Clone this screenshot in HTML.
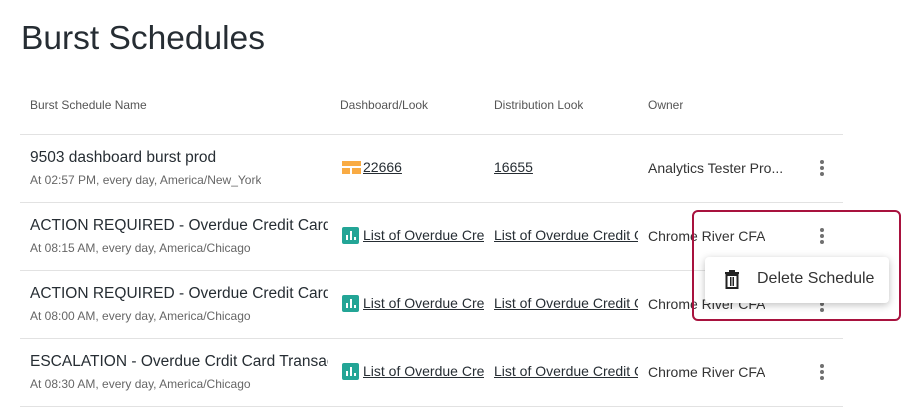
<!DOCTYPE html>
<html><head><style>
body{margin:0;width:906px;height:407px;background:#fff;font-family:"Liberation Sans",sans-serif;color:#262d33;position:relative;overflow:hidden}
.a{position:absolute;white-space:nowrap;overflow:hidden}
h1{position:absolute;left:21px;top:20px;margin:0;font-size:33.5px;font-weight:normal;color:#262d33}
.hd{font-size:12px;color:#555;top:98px}
.line{position:absolute;left:20px;width:823px;height:1px;background:#e2e2e2}
.nm{font-size:15.5px;color:#262d33;width:298px}
.sub{font-size:12px;color:#666}
.lk{font-size:14px;text-decoration:underline;color:#262d33}
.ow{font-size:14px;color:#333}
.dots{position:absolute;width:4px}
.dots i{display:block;width:4px;height:4px;border-radius:2px;background:#707070;margin-bottom:2px}
.ic{position:absolute;width:17px;height:17px;border-radius:2px;background:#23a596}
.ic b{position:absolute;bottom:4px;width:2px;background:#fff}
</style></head><body>
<h1>Burst Schedules</h1>
<div class="a hd" style="left:30px">Burst Schedule Name</div>
<div class="a hd" style="left:340px">Dashboard/Look</div>
<div class="a hd" style="left:494px">Distribution Look</div>
<div class="a hd" style="left:648px">Owner</div>
<div class="line" style="top:134px"></div>
<div class="line" style="top:202px"></div>
<div class="line" style="top:270px"></div>
<div class="line" style="top:338px"></div>
<div class="line" style="top:406px"></div>

<div class="a nm" style="left:30px;top:149px">9503 dashboard burst prod</div>
<div class="a sub" style="left:30px;top:173px">At 02:57 PM, every day, America/New_York</div>
<svg style="position:absolute;left:342px;top:161px" width="20" height="14"><rect x="0" y="0" width="19" height="5" fill="#f9ab43"/><rect x="0" y="7" width="8" height="6" fill="#f9ab43"/><rect x="10" y="7" width="9" height="6" fill="#f9ab43"/></svg>
<div class="a lk" style="left:363px;top:159px">22666</div>
<div class="a lk" style="left:494px;top:159px">16655</div>
<div class="a ow" style="left:648px;top:160px;width:140px">Analytics Tester Pro...</div>
<div class="dots" style="left:820px;top:160px"><i></i><i></i><i></i></div>

<div class="a nm" style="left:30px;top:217px">ACTION REQUIRED - Overdue Credit Card</div>
<div class="a sub" style="left:30px;top:241px">At 08:15 AM, every day, America/Chicago</div>
<div class="ic" style="left:342px;top:227px"><b style="left:4px;height:5px"></b><b style="left:8px;height:9px"></b><b style="left:12px;height:3px"></b></div>
<div class="a lk" style="left:363px;top:227px;width:121px">List of Overdue Credit</div>
<div class="a lk" style="left:494px;top:227px;width:144px">List of Overdue Credit Card</div>
<div class="a ow" style="left:648px;top:228px">Chrome River CFA</div>
<div class="dots" style="left:820px;top:228px"><i></i><i></i><i></i></div>

<div class="a nm" style="left:30px;top:285px">ACTION REQUIRED - Overdue Credit Card</div>
<div class="a sub" style="left:30px;top:309px">At 08:00 AM, every day, America/Chicago</div>
<div class="ic" style="left:342px;top:295px"><b style="left:4px;height:5px"></b><b style="left:8px;height:9px"></b><b style="left:12px;height:3px"></b></div>
<div class="a lk" style="left:363px;top:295px;width:121px">List of Overdue Credit</div>
<div class="a lk" style="left:494px;top:295px;width:144px">List of Overdue Credit Card</div>
<div class="a ow" style="left:648px;top:296px">Chrome River CFA</div>
<div class="dots" style="left:820px;top:296px"><i></i><i></i><i></i></div>

<div class="a nm" style="left:30px;top:353px">ESCALATION - Overdue Crdit Card Transactions</div>
<div class="a sub" style="left:30px;top:377px">At 08:30 AM, every day, America/Chicago</div>
<div class="ic" style="left:342px;top:363px"><b style="left:4px;height:5px"></b><b style="left:8px;height:9px"></b><b style="left:12px;height:3px"></b></div>
<div class="a lk" style="left:363px;top:363px;width:121px">List of Overdue Credit</div>
<div class="a lk" style="left:494px;top:363px;width:144px">List of Overdue Credit Card</div>
<div class="a ow" style="left:648px;top:364px">Chrome River CFA</div>
<div class="dots" style="left:820px;top:364px"><i></i><i></i><i></i></div>

<div style="position:absolute;left:705px;top:257px;width:184px;height:46px;background:#fff;border-radius:4px;box-shadow:0 2px 8px rgba(0,0,0,0.25)"></div>
<svg style="position:absolute;left:724px;top:270px" width="16" height="19" viewBox="0 0 16 19"><rect x="1" y="2" width="14" height="2" fill="#222"/><rect x="5" y="0" width="6" height="2" fill="#222"/><rect x="2.5" y="5" width="11" height="13" fill="none" stroke="#222" stroke-width="2"/><rect x="6" y="7" width="1.5" height="9" fill="#222"/><rect x="8.5" y="7" width="1.5" height="9" fill="#222"/></svg>
<div class="a" style="left:757px;top:270px;font-size:16px;color:#333">Delete Schedule</div>
<div style="position:absolute;left:692px;top:210px;width:205px;height:107px;border:2px solid #a8123e;border-radius:6px"></div>
</body></html>
